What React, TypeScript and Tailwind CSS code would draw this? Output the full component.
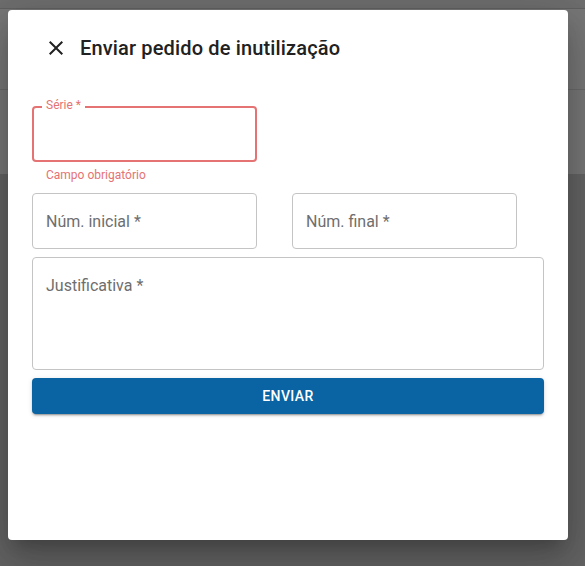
import React from "react";

function CloseIcon() {
  return (
    <svg viewBox="0 0 24 24" width={24} height={24} className="fill-[#212121]">
      <path d="M19 6.41 17.59 5 12 10.59 6.41 5 5 6.41 10.59 12 5 17.59 6.41 19 12 13.41 17.59 19 19 17.59 13.41 12z" />
    </svg>
  );
}

function OutlinedField({ label, className }: { label: string; className: string }) {
  return (
    <div className={`relative rounded-[4px] border border-[#c4c4c4] ${className}`}>
      <span className="absolute left-[13px] top-[16px] text-base leading-[23px] text-[#6e6e6e]">
        {label}
      </span>
    </div>
  );
}

export default function App() {
  return (
    <main className="relative w-[585px] h-[566px] overflow-hidden bg-[#646464] font-['Roboto',sans-serif]">
      {/* page behind the backdrop */}
      <div className="h-[9px] bg-[#6e6e6e] border-b border-[#616161]" />
      <div className="h-[81px] bg-[#777777] border-b border-[#6a6a6a]" />
      <div className="h-[84px] bg-[#777777]" />

      {/* dialog */}
      <div className="absolute left-[8px] top-[10px] w-[560px] h-[530px] rounded-[4px] bg-white shadow-[0px_11px_15px_-7px_rgba(0,0,0,0.2),0px_24px_38px_3px_rgba(0,0,0,0.14),0px_9px_46px_8px_rgba(0,0,0,0.12)]">
        <header className="flex items-center gap-[12px] h-[24px] mt-[26px] pl-[36px]">
          <CloseIcon />
          <h2 className="text-[20px] font-medium leading-[24px] tracking-[0.15px] text-[#212121]">
            Enviar pedido de inutilização
          </h2>
        </header>

        <form className="flex flex-col px-[24px] mt-[46px]">
          <div className="relative w-[225px] h-[56px] rounded-[4px] border-2 border-[#e57373]">
            <span className="absolute left-[8px] -top-[10px] px-[4px] bg-white text-[12px] leading-[14px] text-[#e57373]">
              Série *
            </span>
          </div>
          <p className="mt-[3px] pl-[14px] text-[12px] leading-[20px] text-[#e57373]">
            Campo obrigatório
          </p>

          <div className="flex gap-[35px] mt-[8px]">
            <OutlinedField label="Núm. inicial *" className="w-[225px] h-[56px]" />
            <OutlinedField label="Núm. final *" className="w-[225px] h-[56px]" />
          </div>

          <OutlinedField label="Justificativa *" className="w-full h-[113px] mt-[8px]" />

          <button
            type="button"
            className="mt-[8px] h-[36px] w-full rounded-[4px] bg-[#0a63a2] text-white text-[14px] font-medium tracking-[0.4px] uppercase shadow-[0px_3px_1px_-2px_rgba(0,0,0,0.2),0px_2px_2px_0px_rgba(0,0,0,0.14),0px_1px_5px_0px_rgba(0,0,0,0.12)]"
          >
            Enviar
          </button>
        </form>
      </div>
    </main>
  );
}
